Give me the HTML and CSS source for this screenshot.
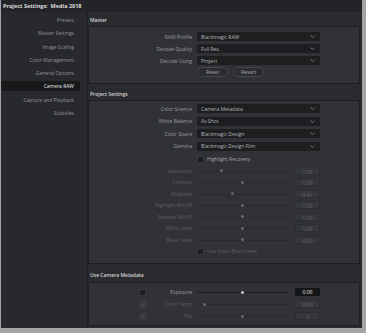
FILE: index.html
```html
<!DOCTYPE html>
<html lang="en">
<head>
  <meta charset="UTF-8">
  <title>Project Settings: Media 2018</title>
  <link rel="stylesheet" href="styles.css">
</head>
<body>
<div class="frame">
  <div class="window">
    <div class="titlebar">Project Settings:&nbsp; Media 2018</div>
    <div class="main">

      <!-- left navigation -->
      <nav class="sidebar">
        <div class="nav-item">Presets</div>
        <div class="nav-item">Master Settings</div>
        <div class="nav-item">Image Scaling</div>
        <div class="nav-item">Color Management</div>
        <div class="nav-item">General Options</div>
        <div class="nav-item active">Camera RAW</div>
        <div class="nav-item">Capture and Playback</div>
        <div class="nav-item">Subtitles</div>
      </nav>

      <div class="content">
        <div class="section-title title-master">Master</div>
        <div class="panel panel-master">
          <div class="row">
            <span class="label">RAW Profile</span>
            <div class="select">Blackmagic RAW<svg class="chev" width="5" height="3" viewBox="0 0 5 3"><path d="M0.5 0.5 L2.5 2.5 L4.5 0.5" fill="none" stroke="#8c8d90" stroke-width="0.8"/></svg></div>
          </div>
          <div class="row">
            <span class="label">Decode Quality</span>
            <div class="select">Full Res.<svg class="chev" width="5" height="3" viewBox="0 0 5 3"><path d="M0.5 0.5 L2.5 2.5 L4.5 0.5" fill="none" stroke="#8c8d90" stroke-width="0.8"/></svg></div>
          </div>
          <div class="row">
            <span class="label">Decode Using</span>
            <div class="select">Project<svg class="chev" width="5" height="3" viewBox="0 0 5 3"><path d="M0.5 0.5 L2.5 2.5 L4.5 0.5" fill="none" stroke="#8c8d90" stroke-width="0.8"/></svg></div>
          </div>
          <div class="row row-buttons">
            <span class="label"></span>
            <div class="buttons">
              <button class="btn">Reset</button>
              <button class="btn">Revert</button>
            </div>
          </div>
        </div>

        <div class="section-title title-project">Project Settings</div>
        <div class="panel panel-project">
          <div class="row">
            <span class="label">Color Science</span>
            <div class="select">Camera Metadata<svg class="chev" width="5" height="3" viewBox="0 0 5 3"><path d="M0.5 0.5 L2.5 2.5 L4.5 0.5" fill="none" stroke="#8c8d90" stroke-width="0.8"/></svg></div>
          </div>
          <div class="row">
            <span class="label">White Balance</span>
            <div class="select">As Shot<svg class="chev" width="5" height="3" viewBox="0 0 5 3"><path d="M0.5 0.5 L2.5 2.5 L4.5 0.5" fill="none" stroke="#8c8d90" stroke-width="0.8"/></svg></div>
          </div>
          <div class="row">
            <span class="label">Color Space</span>
            <div class="select">Blackmagic Design<svg class="chev" width="5" height="3" viewBox="0 0 5 3"><path d="M0.5 0.5 L2.5 2.5 L4.5 0.5" fill="none" stroke="#8c8d90" stroke-width="0.8"/></svg></div>
          </div>
          <div class="row">
            <span class="label">Gamma</span>
            <div class="select">Blackmagic Design Film<svg class="chev" width="5" height="3" viewBox="0 0 5 3"><path d="M0.5 0.5 L2.5 2.5 L4.5 0.5" fill="none" stroke="#8c8d90" stroke-width="0.8"/></svg></div>
          </div>
          <div class="row row-check">
            <span class="label"></span>
            <div class="check-line"><span class="checkbox"></span>Highlight Recovery</div>
          </div>
          <div class="row row-slider dim">
            <span class="label">Saturation</span>
            <div class="control"><div class="slider"><span class="knob" style="left: 27%"></span></div><span class="value">1.00</span></div>
          </div>
          <div class="row row-slider dim">
            <span class="label">Contrast</span>
            <div class="control"><div class="slider"><span class="knob" style="left: 50%"></span></div><span class="value">1.00</span></div>
          </div>
          <div class="row row-slider dim">
            <span class="label">Midpoint</span>
            <div class="control"><div class="slider"><span class="knob" style="left: 39%"></span></div><span class="value">0.41</span></div>
          </div>
          <div class="row row-slider dim">
            <span class="label">Highlight Rolloff</span>
            <div class="control"><div class="slider"><span class="knob" style="left: 50%"></span></div><span class="value">1.00</span></div>
          </div>
          <div class="row row-slider dim">
            <span class="label">Shadow Rolloff</span>
            <div class="control"><div class="slider"><span class="knob" style="left: 50%"></span></div><span class="value">1.00</span></div>
          </div>
          <div class="row row-slider dim">
            <span class="label">White Level</span>
            <div class="control"><div class="slider"><span class="knob" style="left: 50%"></span></div><span class="value">1.00</span></div>
          </div>
          <div class="row row-slider dim">
            <span class="label">Black Level</span>
            <div class="control"><div class="slider"><span class="knob" style="left: 50%"></span></div><span class="value">0.00</span></div>
          </div>
          <div class="row row-slider dim">
            <span class="label"></span>
            <div class="check-line"><span class="checkbox"></span>Use Video Black Level</div>
          </div>
        </div>

        <div class="section-title title-meta">Use Camera Metadata</div>
        <div class="panel panel-meta">
          <div class="row row-slider">
            <span class="label label-check"><span class="checkbox"></span>Exposure</span>
            <div class="control"><div class="slider"><span class="knob" style="left: 50%"></span></div><span class="value">0.00</span></div>
          </div>
          <div class="row row-slider dim">
            <span class="label label-check"><span class="checkbox checked">&#10003;</span>Color Temp</span>
            <div class="control"><div class="slider"><span class="knob" style="left: 8%"></span></div><span class="value">3500</span></div>
          </div>
          <div class="row row-slider dim">
            <span class="label label-check"><span class="checkbox checked">&#10003;</span>Tint</span>
            <div class="control"><div class="slider"><span class="knob" style="left: 50%"></span></div><span class="value">0</span></div>
          </div>
        </div>
      </div>

    </div>
  </div>
</div>
</body>
</html>
```

FILE: styles.css
```css
body {
  margin: 0;
  background-color: #a3a4a6;
  font-family: "Open Sans", Arial, sans-serif;
  font-size: 5px;
  color: #a4a5a8;
}

.frame {
  width: 366px;
  height: 333px;
  box-sizing: border-box;
  padding: 0 4px 5px 1px;
  background-color: #a3a4a6;
}

.window {
  height: 100%;
  display: flex;
  flex-direction: column;
  background-color: #2a2b2f;
}

.titlebar {
  height: 12px;
  line-height: 12px;
  padding-left: 2px;
  background-color: #232427;
  color: #dcdcdc;
  font-size: 5.5px;
  font-weight: 700;
}

.main {
  flex: 1;
  display: flex;
}

/* sidebar */
.sidebar {
  width: 86px;
  padding-top: 3px;
  background-color: #28292d;
  border-right: 1px solid #1b1c1f;
  display: flex;
  flex-direction: column;
  gap: 3.25px;
}

.nav-item {
  height: 10px;
  line-height: 10px;
  margin-right: 7px;
  padding-right: 6px;
  text-align: right;
  color: #929396;
}

.nav-item.active {
  background-color: #18191b;
  color: #e6e6e6;
}

/* content */
.content {
  flex: 1;
  padding-right: 2px;
  display: flex;
  flex-direction: column;
}

.section-title {
  display: flex;
  align-items: flex-end;
  padding-left: 2px;
  box-sizing: border-box;
  color: #d4d4d4;
  font-weight: 600;
  line-height: 6px;
}

.title-master {
  height: 14px;
  padding-bottom: 3px;
}

.title-project {
  height: 16px;
  padding-bottom: 3px;
}

.title-meta {
  height: 18px;
  padding-bottom: 4px;
}

.panel {
  background-color: #313236;
  border: 1px solid #1c1d20;
  display: flex;
  flex-direction: column;
}

.panel-master {
  height: 58px;
  box-sizing: border-box;
  padding-top: 5px;
  gap: 3px;
}

.panel-project {
  height: 164px;
  box-sizing: border-box;
  padding-top: 3px;
  gap: 3.5px;
}

.panel-meta {
  height: 44px;
  box-sizing: border-box;
  padding-top: 5px;
  gap: 4px;
}

.row {
  display: flex;
  align-items: center;
  height: 9px;
}

.label {
  width: 108px;
  flex-shrink: 0;
  box-sizing: border-box;
  padding-right: 5px;
  text-align: right;
  color: #9c9da0;
}

.select {
  width: 123px;
  height: 9px;
  box-sizing: border-box;
  padding: 0 5px 0 4px;
  background-color: #1d1e20;
  border-radius: 1px;
  display: flex;
  align-items: center;
  justify-content: space-between;
  color: #b4b5b8;
}

.row-buttons {
  height: 10px;
  margin-top: -1px;
}

.buttons {
  display: flex;
  gap: 5px;
}

.btn {
  width: 31px;
  height: 10px;
  padding: 0;
  border: 1px solid #46474b;
  border-radius: 5px;
  background-color: #2c2d31;
  color: #a9aaad;
  font-family: inherit;
  font-size: 5px;
}

.row-check {
  height: 8px;
  margin-top: 1px;
}

.check-line {
  display: flex;
  align-items: center;
  gap: 3px;
  color: #a6a7aa;
}

.checkbox {
  width: 7px;
  height: 7px;
  box-sizing: border-box;
  background-color: #1c1d1f;
  border: 1px solid #38393d;
  display: inline-flex;
  align-items: center;
  justify-content: center;
  font-size: 5px;
  color: #6d6e72;
}

.checkbox.checked {
  background-color: #36373b;
  border-color: #3c3d41;
}

.row-slider {
  height: 8px;
}

.control {
  width: 123px;
  display: flex;
  align-items: center;
  gap: 7px;
}

.slider {
  position: relative;
  flex: 1;
  height: 8px;
}

.slider::before {
  content: "";
  position: absolute;
  left: 0;
  right: 0;
  top: 4px;
  height: 1px;
  background-color: #1b1c1e;
}

.knob {
  position: absolute;
  top: 2.5px;
  width: 3px;
  height: 3px;
  margin-left: -1.5px;
  border-radius: 50%;
  background-color: #c9cacc;
}

.value {
  width: 25px;
  height: 8px;
  line-height: 8px;
  box-sizing: border-box;
  background-color: #151617;
  text-align: center;
  color: #f0f0f0;
}

.label-check {
  display: flex;
  align-items: center;
  justify-content: space-between;
  padding-left: 50px;
}

/* disabled rows */
.dim .label,
.dim .check-line {
  color: #5e5f63;
}

.dim .knob {
  background-color: #68696d;
}

.dim .slider::before {
  background-color: #28292c;
}

.dim .value {
  background-color: #36373b;
  border: 1px solid #2c2d30;
  color: #66676b;
}
```
